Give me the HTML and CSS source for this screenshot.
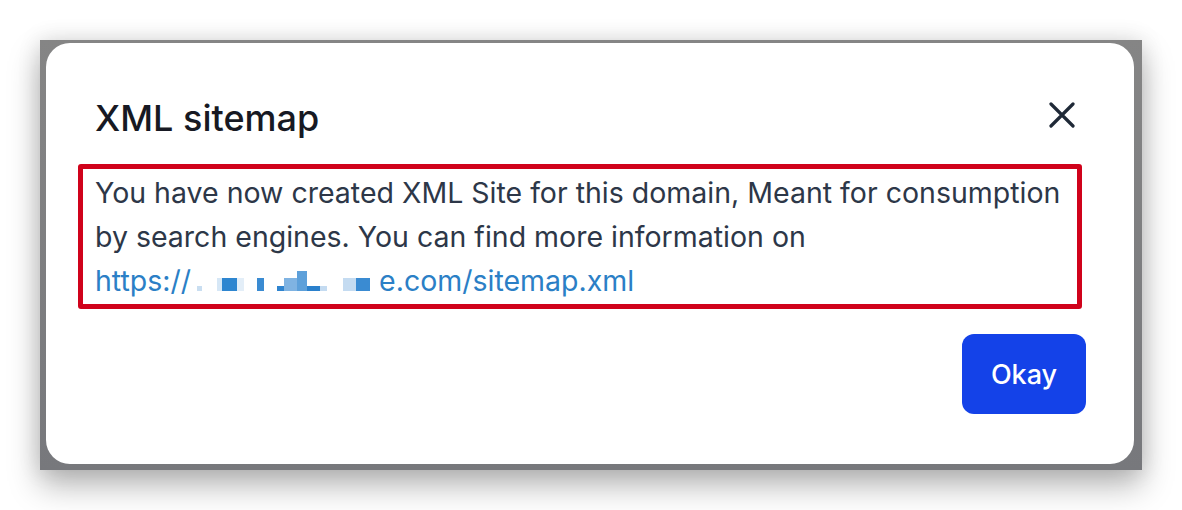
FILE: index.html
```html
<!DOCTYPE html>
<html>
<head>
<meta charset="utf-8">
<link rel="stylesheet" href="styles.css">
</head>
<body>
<div class="overlay">
  <div class="modal">
    <div class="modal-header">
      <h2 class="title">XML sitemap</h2>
      <button class="close" aria-label="Close">
        <svg width="26" height="26" viewBox="0 0 26 26"><path d="M2 2 L24 24 M24 2 L2 24" stroke="#1f2937" stroke-width="3.2" stroke-linecap="round" fill="none"/></svg>
      </button>
    </div>
    <div class="highlight">
      <p class="msg">You have now created XML Site for this domain, Meant for consumption by search engines. You can find more information on <a class="link" href="#">https://<span class="px"><i class="b1"></i><i class="b2"></i><i class="b3"></i><i class="b4"></i><i class="b5"></i><i class="b6"></i><i class="b7"></i><i class="b8"></i><i class="b9"></i><i class="b10"></i><i class="b11"></i><i class="b12"></i></span>e.com/sitemap.xml</a></p>
    </div>
    <div class="modal-footer">
      <button class="okay">Okay</button>
    </div>
  </div>
</div>
</body>
</html>
```
FILE: styles.css
```css
html, body {
  margin: 0;
  padding: 0;
  background: #ffffff;
}
body {
  font-family: Inter, "Noto Sans", sans-serif;
  width: 1182px;
  height: 510px;
  overflow: hidden;
}
.overlay {
  margin: 40px 0 0 40px;
  width: 1102px;
  height: 430px;
  background: linear-gradient(#858585, #77787c);
  box-shadow: 0 16px 30px rgba(0, 0, 0, 0.28), 0 0 22px rgba(0, 0, 0, 0.12);
  padding: 3px 8px 6px 6px;
  box-sizing: border-box;
}
.modal {
  background: #ffffff;
  height: 100%;
  border-radius: 24px;
  padding: 55px 48px 0 49px;
  box-sizing: border-box;
  display: flex;
  flex-direction: column;
}
.modal-header {
  display: flex;
  align-items: center;
  justify-content: space-between;
  height: 40px;
}
.title {
  margin: 0;
  font-size: 36px;
  font-weight: 500;
  color: #171923;
  line-height: 40px;
}
.close {
  border: 0;
  background: none;
  padding: 0;
  margin-right: 11px;
  width: 26px;
  height: 26px;
  display: flex;
  align-items: center;
  justify-content: center;
  cursor: pointer;
  margin-top: -6px;
}
.highlight {
  margin: 26px 4px 0 -17px;
  border: 5px solid #d0021b;
  border-radius: 3px;
  padding: 2px 12px 1px;
}
.msg {
  margin: 0;
  font-size: 28.5px;
  line-height: 44px;
  color: #2d3748;
}
.link {
  color: #2b7fc6;
  text-decoration: none;
  white-space: nowrap;
}
.px {
  display: inline-block;
  width: 188px;
  height: 22px;
  position: relative;
}
.px i {
  position: absolute;
  display: block;
}
.b1 { left: 6px; top: 17px; width: 5px; height: 5px; background: #c9def1; }
.b2 { left: 26px; top: 9px; width: 5px; height: 13px; background: #d6e7f6; }
.b3 { left: 31px; top: 9px; width: 15px; height: 13px; background: #2e86d0; }
.b4 { left: 46px; top: 9px; width: 7px; height: 13px; background: #e3eef8; }
.b5 { left: 66px; top: 9px; width: 7px; height: 13px; background: #3a8bd2; }
.b6 { left: 86px; top: 17px; width: 7px; height: 5px; background: #2f84cf; }
.b7 { left: 93px; top: 9px; width: 13px; height: 13px; background: #7fb3e2; }
.b8 { left: 106px; top: 2px; width: 10px; height: 20px; background: #5da0da; }
.b9 { left: 116px; top: 17px; width: 13px; height: 5px; background: #2a80cc; }
.b10 { left: 129px; top: 17px; width: 7px; height: 5px; background: #c4dbf1; }
.b11 { left: 152px; top: 9px; width: 13px; height: 13px; background: #c4dbf1; }
.b12 { left: 165px; top: 9px; width: 14px; height: 13px; background: #3a8bd2; }
.modal-footer {
  display: flex;
  justify-content: flex-end;
  margin-top: 25px;
}
.okay {
  width: 124px;
  height: 80px;
  border: 0;
  border-radius: 12px;
  background: #1442e8;
  color: #ffffff;
  font-family: Inter, "Noto Sans", sans-serif;
  font-size: 27px;
  font-weight: 500;
  cursor: pointer;
}
```
